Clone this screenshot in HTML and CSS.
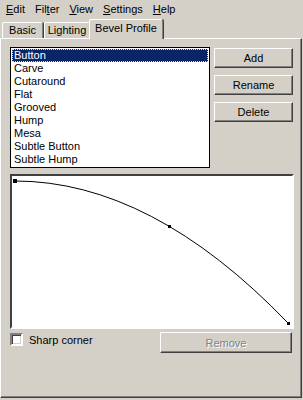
FILE: index.html
```html
<!DOCTYPE html>
<html lang="en">
<head>
    <meta charset="UTF-8">
    <meta name="viewport" content="width=device-width, initial-scale=1.0">
    <link rel="stylesheet" href="styles.css">
</head>
<body>
    <div class="menubar">
        <span class="menu"><u>E</u>dit</span>
        <span class="menu">Fil<u>t</u>er</span>
        <span class="menu"><u>V</u>iew</span>
        <span class="menu"><u>S</u>ettings</span>
        <span class="menu"><u>H</u>elp</span>
    </div>

    <div class="tabs">
        <div class="tab basic">Basic</div>
        <div class="tab lighting">Lighting</div>
        <div class="tab selected">Bevel Profile</div>
    </div>

    <div class="panel">
        <div class="top-row">
            <ul class="listbox">
                <li class="active">Button</li>
                <li>Carve</li>
                <li>Cutaround</li>
                <li>Flat</li>
                <li>Grooved</li>
                <li>Hump</li>
                <li>Mesa</li>
                <li>Subtle Button</li>
                <li>Subtle Hump</li>
            </ul>
            <div class="buttons">
                <button class="btn">Add</button>
                <button class="btn">Rename</button>
                <button class="btn">Delete</button>
            </div>
        </div>

        <div class="curve-box">
            <svg width="280" height="151" viewBox="0 0 280 151">
                <path d="M3,5 Q139.5,5 276,147" fill="none" stroke="#000" stroke-width="1"/>
                <rect x="1" y="3" width="4" height="4" fill="#000"/>
                <rect x="156" y="49" width="3" height="3" fill="#000"/>
                <rect x="275" y="146" width="3" height="3" fill="#000"/>
            </svg>
        </div>

        <div class="bottom-row">
            <label class="check">
                <span class="checkbox"></span>
                Sharp corner
            </label>
            <button class="btn remove" disabled>Remove</button>
        </div>
    </div>
</body>
</html>
```

FILE: styles.css
```css
html, body {
    margin: 0;
    background: #d4d0c8;
}

body {
    width: 303px;
    height: 400px;
    font-family: "Liberation Sans", Arial, sans-serif;
    font-size: 11px;
    color: #000;
    overflow: hidden;
}

/* menu bar */
.menubar {
    display: flex;
    height: 19px;
    padding-left: 1px;
    align-items: center;
}

.menu {
    padding: 0 5px;
    line-height: 17px;
}

/* tabs */
.tabs {
    display: flex;
    height: 19px;
    padding-left: 2px;
    align-items: flex-end;
    position: relative;
    z-index: 2;
}

.tab {
    box-sizing: border-box;
    height: 16px;
    line-height: 15px;
    text-align: center;
    border-top: 1px solid #fff;
    border-left: 1px solid #fff;
    border-right: 1px solid #808080;
    box-shadow: 1px 0 0 #404040;
    border-radius: 2px 2px 0 0;
    margin-right: 1px;
}

.tab.basic {
    width: 41px;
}

.tab.lighting {
    width: 46px;
}

.tab.selected {
    width: 74px;
    height: 20px;
    line-height: 16px;
    margin-left: -2px;
    margin-bottom: -1px;
    background: #d4d0c8;
}

/* tab page */
.panel {
    width: 291px;
    height: 350px;
    padding: 8px 0 0 9px;
    border-top: 1px solid #fff;
    border-left: 1px solid #fff;
    border-right: 1px solid #404040;
    border-bottom: 1px solid #404040;
    box-shadow: inset -1px -1px 0 #808080;
}

.top-row {
    display: flex;
}

.listbox {
    list-style: none;
    margin: 0;
    padding: 1px;
    width: 196px;
    height: 117px;
    background: #fff;
    border: 1px solid #000;
}

.listbox li {
    height: 13px;
    line-height: 13px;
    padding-left: 2px;
}

.listbox li.active {
    background: #0a246a;
    color: #fff;
    outline: 1px dotted #f0e68c;
    outline-offset: -1px;
}

.buttons {
    display: flex;
    flex-direction: column;
    gap: 7px;
    margin-left: 4px;
    margin-top: 1px;
}

.btn {
    font-family: inherit;
    font-size: 11px;
    width: 79px;
    height: 20px;
    padding: 0;
    background: #d4d0c8;
    color: #000;
    border: 1px solid;
    border-color: #fff #404040 #404040 #fff;
    box-shadow: inset -1px -1px 0 #808080;
    border-radius: 0;
}

.curve-box {
    width: 280px;
    height: 151px;
    margin-top: 6px;
    background: #fff;
    border: 2px solid;
    border-color: #404040 #fff #fff #404040;
}

.curve-box svg {
    display: block;
}

.bottom-row {
    display: flex;
    justify-content: space-between;
    align-items: flex-start;
    width: 282px;
    margin-top: 3px;
}

.check {
    display: flex;
    align-items: center;
    gap: 6px;
    margin-top: 1px;
}

.checkbox {
    display: block;
    width: 9px;
    height: 9px;
    background: #fff;
    border: 2px solid;
    border-color: #808080 #fff #fff #808080;
    box-shadow: inset 1px 1px 0 #404040, inset -1px -1px 0 #d4d0c8;
}

.btn.remove {
    width: 132px;
    height: 21px;
    color: #808080;
    text-shadow: 1px 1px 0 #fff;
}
```
